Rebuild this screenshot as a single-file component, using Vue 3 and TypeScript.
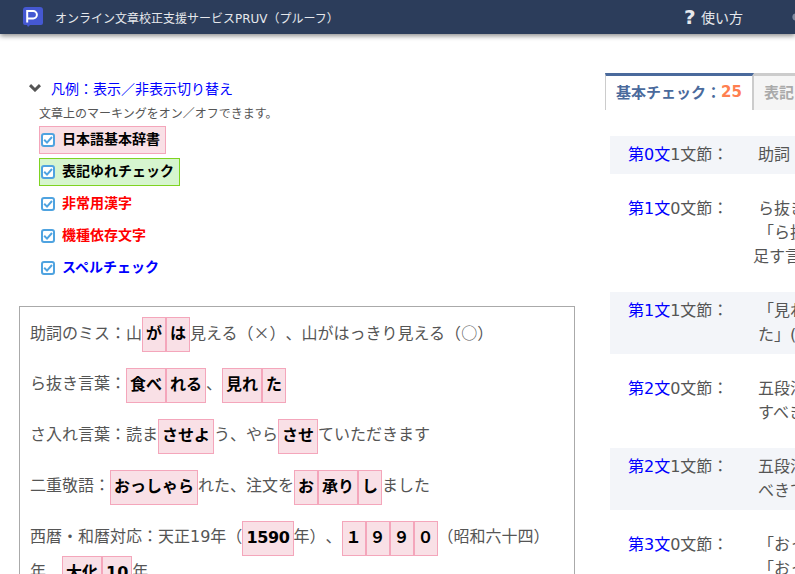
<script setup lang="ts">
interface Legend {
  label: string;
  tone: string;
}
interface Part {
  text: string;
  kind?: 'mark' | 'tight' | 'sym';
}
interface Finding {
  place: string;
  section: string;
  lines: string[];
  outdent?: number;
}

const legends: Legend[] = [
  { label: '日本語基本辞書', tone: 'dict' },
  { label: '表記ゆれチェック', tone: 'yure' },
  { label: '非常用漢字', tone: 'red' },
  { label: '機種依存文字', tone: 'red' },
  { label: 'スペルチェック', tone: 'blue' }
];

const m = (text: string): Part => ({ text, kind: 'mark' });
const s = (text: string): Part => ({ text, kind: 'sym' });
const t = (text: string): Part => ({ text });

const paragraphs: Part[][] = [
  [t('助詞のミス：山'), m('が'), m('は'), t('見える（'), s('×'), t('）、山がはっきり見える（'), s('○'), t('）')],
  [t('ら抜き言葉：'), m('食べ'), m('れる'), t('、'), m('見れ'), m('た')],
  [t('さ入れ言葉：読ま'), m('させよ'), t('う、やら'), m('させ'), t('ていただきます')],
  [t('二重敬語：'), m('おっしゃら'), t('れた、注文を'), m('お'), m('承り'), m('し'), t('ました')],
  [
    t('西暦・和暦対応：天正19年（'),
    { text: '1590', kind: 'tight' },
    t('年）、'),
    m('１'),
    m('９'),
    m('９'),
    m('０'),
    t('（昭和六十四）年、'),
    m('大化'),
    m('10'),
    t('年')
  ]
];

const findings: Finding[] = [
  { place: '第0文', section: '1文節：', lines: ['助詞'] },
  { place: '第1文', section: '0文節：', lines: ['ら抜き言葉', '「ら抜き', '足す言葉'], outdent: 2 },
  { place: '第1文', section: '1文節：', lines: ['「見れた', 'た」('] },
  { place: '第2文', section: '0文節：', lines: ['五段活用', 'すべき'] },
  { place: '第2文', section: '1文節：', lines: ['五段活用', 'べきで'] },
  { place: '第3文', section: '0文節：', lines: ['「おっ', '「おっ'] }
];
</script>

<template>
  <div class="page">
    <header class="header">
      <svg class="logo" viewBox="0 0 20 20" width="20" height="20">
        <path d="M3 0h14a3 3 0 0 1 3 3v13a2 2 0 0 1-2 2H7l-2 2-1-2H2a2 2 0 0 1-2-2V3a3 3 0 0 1 3-3z" fill="#4558d2" />
        <path d="M4.2 15.5V4h6a3.7 3.7 0 0 1 0 7.4h-6" fill="none" stroke="#fff" stroke-width="2" />
      </svg>
      <span class="title">オンライン文章校正支援サービスPRUV（プルーフ）</span>
      <span class="help"><b class="help__mark">?</b>使い方</span>
      <svg class="settings" viewBox="0 0 10 10" width="10" height="10">
        <circle cx="5" cy="5" r="3.6" fill="#7f8a9f" />
      </svg>
    </header>

    <div class="columns">
      <main class="left">
        <div class="toggle">
          <svg class="chevron" viewBox="0 0 12 8" width="12" height="8">
            <path d="M1 1.2 6 6l5-4.8" fill="none" stroke="#555" stroke-width="3" />
          </svg>
          <span class="toggle__link">凡例：表示／非表示切り替え</span>
        </div>
        <p class="hint">文章上のマーキングをオン／オフできます。</p>
        <ul class="legend">
          <li v-for="item in legends" :key="item.label" class="legend__item" :class="`legend__item--${item.tone}`">
            <svg class="check" viewBox="0 0 14 14" width="14" height="14">
              <rect x="1" y="1" width="12" height="12" rx="2" fill="#fff" stroke="#4fa3e0" stroke-width="2" />
              <path d="M3.2 6.8 6 9.6l5-5.6" fill="none" stroke="#4fa3e0" stroke-width="2" />
            </svg>
            {{ item.label }}
          </li>
        </ul>
        <section class="sample">
          <p v-for="(parts, i) in paragraphs" :key="i" class="sample__line">
            <template v-for="(part, j) in parts" :key="j">
              <span v-if="part.kind === 'mark'" class="mark">{{ part.text }}</span>
              <span v-else-if="part.kind === 'tight'" class="mark mark--tight">{{ part.text }}</span>
              <span v-else-if="part.kind === 'sym'" class="sym">{{ part.text }}</span>
              <template v-else>{{ part.text }}</template>
            </template>
          </p>
        </section>
      </main>

      <aside class="right">
        <nav class="tabs">
          <div class="tab tab--active">基本チェック：<span class="tab__count">25</span></div>
          <div class="tab">表記ゆれチェック</div>
        </nav>
        <ul class="findings">
          <li v-for="(row, i) in findings" :key="i" class="finding">
            <div class="finding__label">
              <span class="finding__link">{{ row.place }}</span>{{ row.section }}
            </div>
            <div class="finding__body">
              <div
                v-for="(line, k) in row.lines"
                :key="k"
                class="finding__line"
                :class="{ 'finding__line--out': row.outdent === k }"
              >
                {{ line }}
              </div>
            </div>
          </li>
        </ul>
      </aside>
    </div>
  </div>
</template>

<style>
html,
body {
  margin: 0;
  overflow: hidden;
  background: #fff;
}
</style>

<style scoped>
.page {
  width: 795px;
  height: 574px;
  overflow: hidden;
  font-family: 'DejaVu Sans', 'Noto Sans CJK JP', sans-serif;
  text-spacing-trim: space-all;
  color: #555;
}

.header {
  display: flex;
  align-items: center;
  height: 34px;
  padding-left: 23px;
  background: #2c3d5b;
  box-shadow: 0 2px 5px rgba(0, 0, 0, 0.45);
  color: #e6e8ec;
}

.logo {
  margin-right: 12px;
}

.title {
  flex: 1;
  font-size: 12px;
}

.help {
  display: flex;
  align-items: center;
  font-size: 14px;
}

.help__mark {
  width: 17px;
  margin-left: -2px;
  font-size: 20px;
  line-height: 1;
}

.settings {
  margin: 0 -6px 0 48px;
}

.columns {
  display: flex;
}

.left {
  flex: none;
  width: 556px;
  margin-left: 19px;
  padding-top: 44px;
}

.toggle {
  display: flex;
  align-items: center;
  height: 20px;
  padding-left: 10px;
}

.chevron {
  margin-right: 10px;
}

.toggle__link {
  font-size: 14px;
  color: #00f;
}

.hint {
  margin: 8px 0 0 20px;
  font-size: 12px;
  line-height: 16px;
}

.legend {
  margin: 4px 0 0 20px;
  padding: 0;
  list-style: none;
  display: flex;
  flex-direction: column;
  align-items: flex-start;
  gap: 4px;
}

.legend__item {
  display: flex;
  align-items: center;
  gap: 7px;
  height: 28px;
  padding: 0 5px 4px 1px;
  box-sizing: border-box;
  border: 1px solid transparent;
  font-size: 14px;
  font-weight: 700;
}

.legend__item--dict {
  background: #f9e0e6;
  border-color: #f4a6bb;
  color: #000;
}

.legend__item--yure {
  background: #d6f5cf;
  border-color: #7ed321;
  color: #000;
}

.legend__item--red {
  color: #f00;
}

.legend__item--blue {
  color: #00f;
}

.check {
  flex: none;
  margin-top: 3px;
}

.sample {
  margin-top: 24px;
  height: 300px;
  padding: 10px;
  box-sizing: border-box;
  border: 1px solid #aaa;
}

.sample__line {
  margin: 0 0 16px;
  font-size: 16px;
  line-height: 31px;
}

.sym {
  font-family: 'Noto Sans CJK JP', sans-serif;
}

.mark {
  display: inline-block;
  vertical-align: top;
  height: 35px;
  padding: 0 3px;
  box-sizing: border-box;
  border: 1px solid #f4a6bb;
  background: #f9e0e6;
  color: #000;
  font-weight: 700;
  line-height: 32px;
}

.mark--tight {
  letter-spacing: -0.35px;
}

.right {
  flex: none;
  width: 400px;
  margin-left: 30px;
  padding-top: 39px;
}

.tabs {
  display: flex;
  height: 37px;
}

.tab {
  display: flex;
  align-items: center;
  padding: 0 10px 3px;
  box-sizing: border-box;
  background: #f5f5f5;
  border-top: 3px solid #ccc;
  color: #aaa;
  font-size: 15px;
  font-weight: 700;
}

.tab--active {
  background: #fff;
  border-top-color: #4a6a9c;
  border-left: 1px solid #ccc;
  border-right: 2px solid #ccc;
  color: #4a6a9c;
}

.tab__count {
  color: #ff7f50;
}

.findings {
  margin: 26px 0 0 5px;
  padding: 0;
  list-style: none;
  display: flex;
  flex-direction: column;
  gap: 16px;
}

.finding {
  display: flex;
  padding: 7px 0 7px 18px;
  font-size: 16px;
  line-height: 24px;
}

.finding:nth-child(odd) {
  background: #f3f5f9;
}

.finding__label {
  flex: none;
  width: 130px;
}

.finding__link {
  color: #00f;
}

.finding__body {
  white-space: nowrap;
}

.finding__line--out {
  margin-left: -5px;
}
</style>
